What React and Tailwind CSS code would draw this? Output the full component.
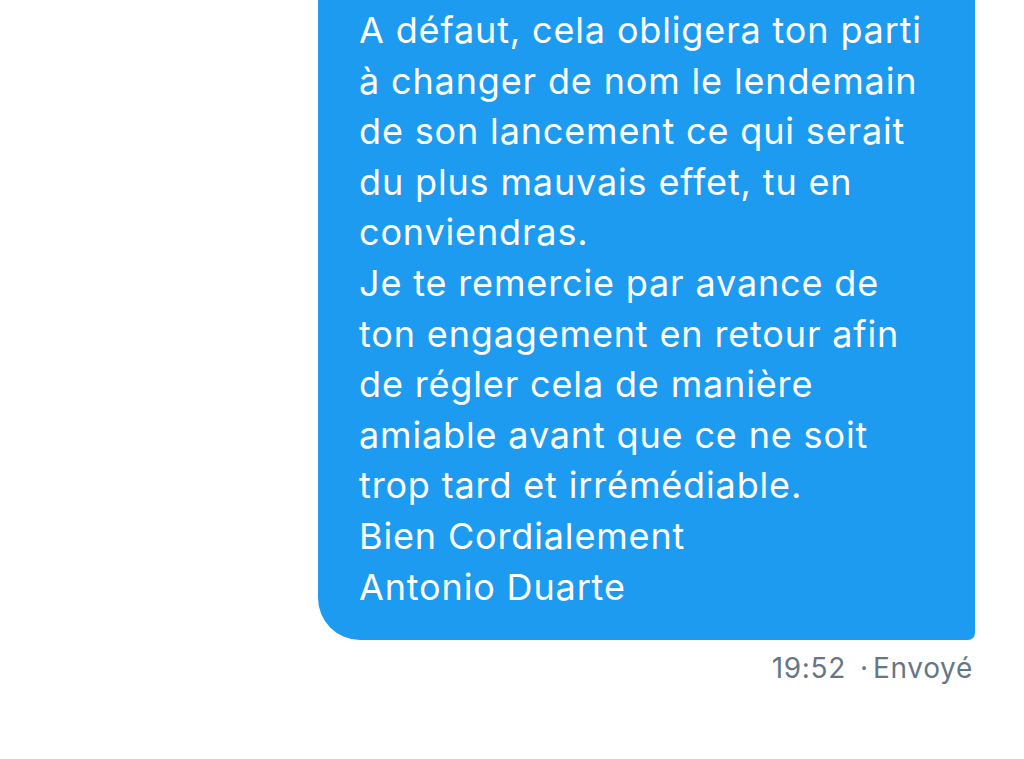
export default function App() {
  const lines = [
    "A défaut, cela obligera ton parti",
    "à changer de nom le lendemain",
    "de son lancement ce qui serait",
    "du plus mauvais effet, tu en",
    "conviendras.",
    "Je te remercie par avance de",
    "ton engagement en retour afin",
    "de régler cela de manière",
    "amiable avant que ce ne soit",
    "trop tard et irrémédiable.",
    "Bien Cordialement",
    "Antonio Duarte",
  ];
  return (
    <div className="w-[1024px] h-[759px] bg-white overflow-hidden" style={{ fontFamily: "Inter, 'Noto Sans', sans-serif" }}>
      <div className="flex flex-col items-end pr-[49px] pl-[318px]">
        <div className="w-[657px] bg-[#1d9bf0] text-white rounded-bl-[42px] rounded-br-[7px] pl-[41px] pr-4 pt-[5px] pb-[28px] text-[36px] leading-[50.6px] tracking-[0.85px]">
          {lines.map((l, i) => (
            <div key={i} className="whitespace-nowrap">{l}</div>
          ))}
        </div>
        <div className="mt-[12px] text-[28px] leading-[32px] tracking-[0.7px] text-[#657786] whitespace-nowrap pr-[2px] flex items-baseline">
          <span>19:52</span>
          <span className="ml-[14px]">·</span>
          <span className="ml-[4px]">Envoyé</span>
        </div>
      </div>
    </div>
  );
}
